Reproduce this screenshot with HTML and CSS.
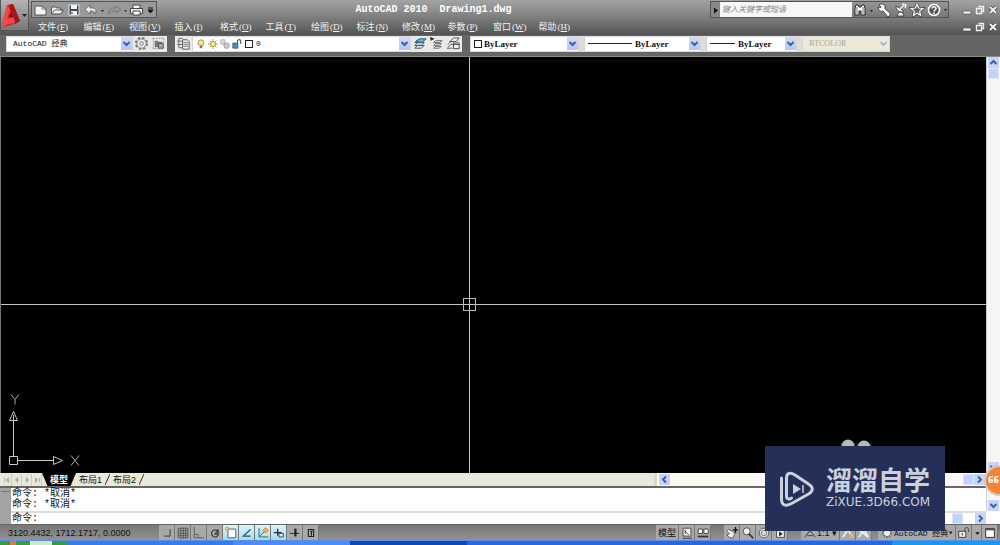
FILE: index.html
```html
<!DOCTYPE html>
<html lang="zh">
<head>
<meta charset="utf-8">
<title>AutoCAD 2010 Drawing1.dwg</title>
<link rel="stylesheet" href="styles.css">
</head>
<body>
<svg class="defs" aria-hidden="true">
  <symbol id="chev" viewBox="0 0 11 11"><path d="M2.500 4l3 3 3-3" fill="none" stroke="#3f5f9f" stroke-width="2"/></symbol>
  <symbol id="square" viewBox="0 0 10 10"><rect x="1.500" y="1.500" width="7" height="7" fill="#fff" stroke="#222"/></symbol>
  <symbol id="min" viewBox="0 0 10 10"><path d="M1 6h8v3H1z" fill="#eee" stroke="#444" stroke-width=".6"/></symbol>
  <symbol id="restore" viewBox="0 0 10 10"><path d="M3.500 1.500h5v5h-2M1.500 3.500h5v5h-5z" fill="none" stroke="#eee" stroke-width="1.400"/></symbol>
  <symbol id="close" viewBox="0 0 10 10"><path d="M2 2l6 6M8 2l-6 6" stroke="#444" stroke-width="3.200"/><path d="M2 2l6 6M8 2l-6 6" stroke="#f2f2f2" stroke-width="2"/></symbol>
  <symbol id="layers" viewBox="0 0 16 16"><path d="M3 13l3-3h7l-3 3zM3 10l3-3h7l-3 3zM3 7l3-3h7l-3 3z" fill="#dde6ee" stroke="#4b5964"/></symbol>
</svg>

<header class="header">
  <button class="app" aria-label="应用程序菜单">
    <svg width="29" height="30" viewBox="0 0 29 30"><path d="M7 5l6-1 7 17-5 3-11 3-2-3z" fill="#d3262b"/><path d="M9 5l4-1 7 17-5 3z" fill="#a7151c"/><path d="M7 5l3 5-3 9 7-1 1 5-7 1-5 3-1-3z" fill="#ef4a4d"/><path d="M9 17l2-5 2 5z" fill="#82090f"/><path d="M22 14h5l-2.500 3z" fill="#222"/></svg>
  </button>
  <div class="bars">
    <div class="titlebar">
      <div class="quick">
        <button aria-label="新建"><svg width="17" height="14" viewBox="0 0 15 14"><path d="M2 3h7l4 3v6H2z" fill="#f5f5f5" stroke="#555"/><path d="M9 3v3h4" fill="none" stroke="#777"/></svg></button>
        <button aria-label="打开"><svg width="16" height="14" viewBox="0 0 15 14"><path d="M2 11V4h4l1 1h4v2h3l-3 4z" fill="#eee" stroke="#555"/><path d="M3 10l2-3h8" fill="none" stroke="#666"/></svg></button>
        <button aria-label="保存"><svg width="17" height="14" viewBox="0 0 17 14"><path d="M4 2h10v10H4z" fill="#3d4852" stroke="#dfe4e8"/><path d="M6 2h6v4H6zM6 8h6v4H6z" fill="#f4f4f4"/><path d="M7 9v2" stroke="#333"/></svg></button>
        <button aria-label="放弃"><svg width="22" height="14" viewBox="0 0 22 14"><path d="M8 2v3h2c4 0 5 3 3 6 0-2-1-3-3-3H8v3L3 6.500z" fill="#eee" stroke="#555" stroke-width=".7"/><path d="M19 7h3l-1.500 2z" fill="#222"/></svg></button>
        <button aria-label="重做"><svg width="24" height="14" viewBox="0 0 24 14"><path d="M12 3v2H9c-4 0-5 3-4 6 1-2 2-3 4-3h3v2l5-3.500z" fill="#999" stroke="#707070" stroke-width=".8"/><path d="M20 7h3l-1.500 2z" fill="#333"/></svg></button>
        <button aria-label="打印"><svg width="17" height="14" viewBox="0 0 15 14"><path d="M4 6V2h7v4" fill="#fff" stroke="#444"/><path d="M1.500 5.500h12v5h-12z" fill="#eee" stroke="#444"/><path d="M4 8h7v4H4z" fill="#fff" stroke="#444"/></svg></button>
        <button aria-label="自定义"><svg width="11" height="14" viewBox="2 0 11 14"><path d="M5 5h5M5 7h5l-2.500 3z" fill="#111" stroke="#111"/></svg></button>
      </div>
      <h1 class="title">AutoCAD 2010&nbsp; Drawing1.dwg</h1>
      <div class="info">
        <button class="expand" aria-label="展开"><svg width="9" height="14" viewBox="0 0 9 14"><path d="M3 4.500l4 3-4 3z" fill="#111"/></svg></button>
        <input class="search" type="text" aria-label="搜索" placeholder="键入关键字或短语">
        <button aria-label="搜索"><svg width="24" height="14" viewBox="0 0 24 14"><path d="M3 5l1-3h2l1 2h2l1-2h2l1 3v7H9V8H7v4H3z" fill="#fff" stroke="#222"/><path d="M5 4v7M11 4v7" stroke="#777"/><path d="M18 7h3l-1.500 2z" fill="#222"/></svg></button>
        <button aria-label="工具"><svg width="16" height="14" viewBox="0 0 16 14"><path d="M3 2c2-2 5-1 6 1v3l5 4v2l-2 2-5-6c-3 1-5-1-5-4l2 1 1-1z" fill="#f6f6f6" stroke="#333" stroke-width=".8"/></svg></button>
        <button aria-label="通讯中心"><svg width="17" height="14" viewBox="0 0 17 14"><path d="M4 3c0 4 3 7 8 6L9 6zM7 9l-2 4h7l-2-4z" fill="#f6f6f6" stroke="#333" stroke-width=".8"/><path d="M8 6l4-4M10 1l4 1-1 3" fill="none" stroke="#eee" stroke-width="1.400"/></svg></button>
        <button aria-label="收藏夹"><svg width="16" height="14" viewBox="0 0 16 14"><path d="M8 1l1.700 4 4.300.4-3.300 3 1 4.100L8 10.300l-3.700 2.200 1-4.100-3.300-3L6.300 5z" fill="#888" stroke="#333" stroke-width="2.600"/><path d="M8 1l1.700 4 4.300.4-3.300 3 1 4.100L8 10.300l-3.700 2.200 1-4.100-3.300-3L6.300 5z" fill="#666" stroke="#fff" stroke-width="1.200"/></svg></button>
        <button class="help" aria-label="帮助"><svg width="16" height="14" viewBox="0 0 16 14"><circle cx="8" cy="7" r="5.500" fill="#555" stroke="#fff" stroke-width="1.500"/><path d="M6 5.500c0-2.500 4-2.500 4 0 0 1.500-2 1.500-2 3M8 9.500V11" fill="none" stroke="#fff" stroke-width="1.500"/></svg></button>
        <svg width="5" height="14" viewBox="0 0 5 14"><path d="M1 6h3L2.500 8z" fill="#222"/></svg>
      </div>
      <div class="wincontrols">
        <button aria-label="最小化"><svg><use href="#min"/></svg></button>
        <button aria-label="还原"><svg><use href="#restore"/></svg></button>
        <button aria-label="关闭"><svg><use href="#close"/></svg></button>
      </div>
    </div>
    <nav class="menubar">
      <div class="menus"><button>文件<i>(<u>F</u>)</i></button><button>编辑<i>(<u>E</u>)</i></button><button>视图<i>(<u>V</u>)</i></button><button>插入<i>(<u>I</u>)</i></button><button>格式<i>(<u>O</u>)</i></button><button>工具<i>(<u>T</u>)</i></button><button>绘图<i>(<u>D</u>)</i></button><button>标注<i>(<u>N</u>)</i></button><button>修改<i>(<u>M</u>)</i></button><button>参数<i>(<u>P</u>)</i></button><button>窗口<i>(<u>W</u>)</i></button><button>帮助<i>(<u>H</u>)</i></button></div>
      <div class="wincontrols">
        <button aria-label="最小化图形"><svg><use href="#min"/></svg></button>
        <button aria-label="还原图形"><svg><use href="#restore"/></svg></button>
        <button aria-label="关闭图形"><svg><use href="#close"/></svg></button>
      </div>
    </nav>
  </div>
</header>

<div class="toolbars">
  <div class="toolbar">
    <label class="combo workspace"><select aria-label="工作空间"><option>AutoCAD 经典</option></select><svg class="drop"><use href="#chev"/></svg></label>
    <button class="tool" aria-label="工作空间设置"><svg viewBox="0 0 16 16"><circle cx="8" cy="8" r="6" fill="#eee" stroke="#777" stroke-width="2" stroke-dasharray="2.700 2"/><circle cx="8" cy="8" r="5" fill="#eee" stroke="#777"/><circle cx="8" cy="8" r="2" fill="none" stroke="#777"/></svg></button>
    <button class="tool" aria-label="我的工作空间"><svg viewBox="0 0 16 16"><path d="M2 2.500h12M2 13.500h12M2.500 2v12M13.500 2v12" stroke="#999" stroke-dasharray="2 1"/><path d="M4 5h3l1 1h4v6H4z" fill="#777"/><path d="M8 8h5v5H8z" fill="#aaa" stroke="#555"/></svg></button>
  </div>
  <div class="toolbar layers">
    <button class="tool" aria-label="图层特性"><svg viewBox="0 0 16 16"><path d="M7 2.500H3v10h4M3 5.500h4M3 9h4M1 5.500h2M1 9h2" fill="none" stroke="#666"/><path d="M7 4h5l2 2v8H7z" fill="#eee" stroke="#555"/><path d="M8 7h5M8 9h5M8 11h5" stroke="#777"/></svg></button>
    <label class="combo layer">
      <svg class="state" viewBox="0 0 12 12"><circle cx="6" cy="4.500" r="3.500" fill="#ffe48b" stroke="#a97f2b"/><path d="M4.500 8h3v3h-3z" fill="#777"/></svg>
      <svg class="state" viewBox="0 0 12 12"><path d="M6 0v12M0 6h12M2 2l8 8M10 2l-8 8" stroke="#b18b3c"/><circle cx="6" cy="6" r="3" fill="#fff09a" stroke="#a77f32"/></svg>
      <svg class="state" viewBox="0 0 12 12"><path d="M1 1h5v5H1zM3 6h3" fill="#ddd" stroke="#aaa"/><circle cx="8" cy="8" r="3.300" fill="#ccc" stroke="#999"/></svg>
      <svg class="state" viewBox="0 0 12 12"><path d="M1 5h6v6H1z" fill="#4c91ba" stroke="#235b80"/><path d="M6.500 5V3c0-3 4-3 4 0v3" fill="none" stroke="#35617e" stroke-width="1.400"/></svg>
      <svg class="swatch"><use href="#square"/></svg>
      <select aria-label="图层"><option>0</option></select><svg class="drop"><use href="#chev"/></svg>
    </label>
    <button class="tool" aria-label="置为当前"><svg viewBox="0 0 16 16"><use href="#layers"/><path d="M4 6l4-3h7l-4 4z" fill="#65aee0" stroke="#28597d"/></svg></button>
    <button class="tool" aria-label="上一个图层"><svg viewBox="0 0 16 16"><path d="M5 13l2-2h6l-2 2zM5 10l2-2h6l-2 2zM5 7l2-2h7l-3 2z" fill="#eee" stroke="#666"/><path d="M1 1l5 2-4 2z" fill="#222"/></svg></button>
    <button class="tool" aria-label="图层状态"><svg viewBox="0 0 16 16"><path d="M2 12l3-3h3M2 9l3-3h4M4 6l4-4h6l-3 4H4M1 13h6" fill="none" stroke="#555"/><path d="M8 7.500h6v6H8zM8 9h6" fill="#eee" stroke="#444"/></svg></button>
  </div>
  <div class="toolbar props">
    <label class="combo color"><svg class="swatch"><use href="#square"/></svg><select aria-label="颜色"><option>ByLayer</option></select><svg class="drop"><use href="#chev"/></svg></label>
    <label class="combo linetype"><span class="line"></span><select aria-label="线型"><option>ByLayer</option></select><svg class="drop"><use href="#chev"/></svg></label>
    <label class="combo weight"><span class="line"></span><select aria-label="线宽"><option>ByLayer</option></select><svg class="drop"><use href="#chev"/></svg></label>
    <label class="combo plot"><select aria-label="打印样式" disabled><option>BTCOLOR</option></select><svg class="drop"><use href="#chev"/></svg></label>
  </div>
</div>

<main class="drawing">
  <div class="canvas">
    <div class="cross-h"></div><div class="cross-v"></div><div class="pick"></div>
    <svg class="ucs" viewBox="0 0 76 76"><g fill="none" stroke="#c8c8c8"><path d="M5.500 60.500h8v8h-8zM9.500 60V19M14 64.500h36M9.500 15.500l-4 9h8zM58.500 64.500l-9-4v8z"/><path d="M7 -1.500l4 5 4-5M11 3.500v5M67 59.500l8 10M75 59.500l-8 10" stroke="#aaa"/></g></svg>
    <svg class="ears" viewBox="0 0 30 10"><circle cx="7" cy="7" r="6.500" fill="#b9b9b5"/><circle cx="23" cy="8" r="6.500" fill="#b9b9b5"/></svg>
  </div>
  <div class="vscroll"><button aria-label="向上"><svg class="up"><use href="#chev"/></svg></button><span class="thumb"></span><span class="space"></span><button aria-label="向下"><svg><use href="#chev"/></svg></button></div>
</main>

<div class="tabs">
  <div class="steps">
    <button aria-label="第一个"><svg viewBox="0 0 10 10"><path d="M2 2v6M7 2L4 5l3 3z" fill="#aaa" stroke="#aaa"/></svg></button>
    <button aria-label="上一个"><svg viewBox="0 0 10 10"><path d="M6 2L3 5l3 3z" fill="#aaa" stroke="#aaa"/></svg></button>
    <button aria-label="下一个"><svg viewBox="0 0 10 10"><path d="M4 2l3 3-3 3z" fill="#aaa" stroke="#aaa"/></svg></button>
    <button aria-label="最后一个"><svg viewBox="0 0 10 10"><path d="M8 2v6M3 2l3 3-3 3z" fill="#aaa" stroke="#aaa"/></svg></button>
  </div>
  <button class="tab active">模型</button><button class="tab">布局1</button><svg class="slash" viewBox="0 0 5 13"><path d="M0 12L5 1" stroke="#333"/></svg><button class="tab">布局2</button><svg class="slash" viewBox="0 0 5 13"><path d="M0 12L5 1" stroke="#333"/></svg>
  <div class="hscroll"><button aria-label="向左"><svg class="left"><use href="#chev"/></svg></button><span class="space"></span><span class="thumb"></span><button aria-label="向右"><svg class="right"><use href="#chev"/></svg></button></div>
</div>

<section class="command">
  <div class="grip"></div>
  <div class="console">
    <div class="history"><p>命令: *取消*</p><p>命令: *取消*</p></div>
    <div class="prompt"><label for="cmd">命令:</label><input id="cmd" type="text"><span class="thumb"></span><button aria-label="命令向右"><svg class="right"><use href="#chev"/></svg></button></div>
  </div>
  <div class="cmdscroll"><span class="space"></span><button aria-label="命令向下"><svg><use href="#chev"/></svg></button></div>
</section>

<footer class="status">
  <output class="coords">3120.4432, 1712.1717, 0.0000</output>
  <div class="cells toggles">
    <button aria-label="捕捉"><svg viewBox="0 0 16 16"><path d="M4 4h8v8H4z" fill="none" stroke="#888" stroke-dasharray="1 1"/><path d="M11.500 4v7.500H5" fill="none" stroke="#333"/></svg></button>
    <button aria-label="栅格"><svg viewBox="0 0 16 16"><path d="M2.500 2.500h11v11h-11zM5.500 2v12M8.500 2v12M11 2v12M2 5.500h12M2 8.500h12M2 11h12" fill="none" stroke="#444" stroke-width=".8"/></svg></button>
    <button aria-label="正交"><svg viewBox="0 0 16 16"><path d="M2.500 1v12.500H14M3 9.500h4v4" fill="none" stroke="#555"/></svg></button>
    <button aria-label="极轴"><svg viewBox="0 0 16 16"><path d="M11.500 6.500A4 4 0 1 0 12 9H8l4-5" fill="none" stroke="#333" stroke-width="1.200"/><path d="M11 3l2 5-3-1z" fill="#333"/></svg></button>
    <button class="on" aria-label="对象捕捉"><svg viewBox="0 0 16 16"><path d="M4.500 3.500h9v10h-9z" fill="#fff" stroke="#456"/><path d="M2 1.500h3v3H2z" fill="#ffda9e" stroke="#d58b3c"/></svg></button>
    <button class="on" aria-label="对象追踪"><svg viewBox="0 0 16 16"><path d="M12 4l-8 7.500h8" fill="none" stroke="#245b69" stroke-width="1.500"/></svg></button>
    <button class="on" aria-label="动态 UCS"><svg viewBox="0 0 16 16"><path d="M3.500 2v10.500H14M3.500 12.500l8-8" fill="none" stroke="#245b69"/><path d="M8 5l3-3 3 3-3 3z" fill="#efb64b" stroke="#b57622"/></svg></button>
    <button class="on" aria-label="动态输入"><svg viewBox="0 0 16 16"><path d="M2 7.500h9M6.500 3v8" stroke="#234" stroke-width="1.500"/><path d="M8 8.500h5v4H8z" fill="#d9ebf0" stroke="#345"/></svg></button>
    <button aria-label="线宽显示"><svg viewBox="0 0 16 16"><path d="M2 8.500h11" stroke="#222"/><path d="M8.500 3v9" stroke="#222" stroke-width="2.500"/></svg></button>
    <button aria-label="快捷特性"><svg viewBox="0 0 16 16"><path d="M5 4h6v8H5zM7 6h3M8.500 6v5" fill="none" stroke="#222" stroke-width="1.300"/></svg></button>
  </div>
  <div class="fill"></div>
  <div class="cells">
    <button class="text">模型</button>
    <button aria-label="布局"><svg viewBox="0 0 16 16"><path d="M3.500 2.500h9v9h-9z" fill="#eee" stroke="#444"/><path d="M5 5l5 5M6 9V5" fill="none" stroke="#444"/><path d="M3 14h11" stroke="#333"/></svg></button>
    <button aria-label="快速查看"><svg viewBox="0 0 16 16"><path d="M2.500 3.500h5v5h-5zM9 3.500h5v5H9z" fill="#fff" stroke="#333"/><path d="M2 12h12" stroke="#333" stroke-width="2"/></svg></button>
  </div>
  <div class="cells">
    <button aria-label="平移"><svg viewBox="0 0 16 16"><path d="M2 6l2-2 5 2 2 3-2 5-4-1-3-3 3-1z" fill="#eee" stroke="#555"/><path d="M12 1v7M9 4.500h6" stroke="#111" stroke-width="1.500"/></svg></button>
    <button aria-label="缩放"><svg viewBox="0 0 16 16"><circle cx="6.500" cy="6" r="4" fill="#eee" stroke="#444"/><path d="M9 9l5 5" stroke="#333" stroke-width="2"/></svg></button>
    <button aria-label="导航"><svg viewBox="0 0 16 16"><circle cx="8" cy="8" r="5.500" fill="#ddd" stroke="#555"/><circle cx="8" cy="8" r="3" fill="none" stroke="#777"/></svg></button>
    <button aria-label="运动"><svg viewBox="0 0 16 16"><path d="M4 4h9v9H4z" fill="#eee" stroke="#444"/><path d="M7 6l4 3-4 3z" fill="#223"/></svg></button>
  </div>
  <div class="cells scaling">
    <button class="text scale"><svg viewBox="0 0 16 16"><path d="M8 5l-6 8M8 5l6 8M8 1v6M5 11h6" fill="none" stroke="#333"/></svg>1:1 ▾</button>
    <button aria-label="注释可见性"><svg viewBox="0 0 16 16"><path d="M2 13l6-9 5 9" fill="none" stroke="#eee" stroke-width="2"/><path d="M10 8l4 4-3 2z" fill="#eeb83e"/></svg></button>
    <button aria-label="自动注释"><svg viewBox="0 0 16 16"><path d="M2 13l6-9 5 9M3 5l9 7" fill="none" stroke="#eee" stroke-width="2"/></svg></button>
  </div>
  <div class="cells last">
    <button class="text ws"><svg viewBox="0 0 16 16"><circle cx="8" cy="8" r="4.500" fill="#eee" stroke="#555" stroke-width="2" stroke-dasharray="2 1"/></svg>AutoCAD 经典<span>▾</span></button>
    <button aria-label="锁定"><svg viewBox="0 0 16 16"><path d="M2 6h8v7H2z" fill="#eee" stroke="#333"/><path d="M9 6V4c0-3 4-3 4 0v3" fill="none" stroke="#333"/><path d="M6 8v3" stroke="#222"/></svg></button>
    <button class="narrow" aria-label="状态栏菜单"><svg viewBox="0 0 8 16"><path d="M2 7h5L4.500 10z" fill="#111"/></svg></button>
    <button aria-label="全屏显示"><svg viewBox="0 0 16 16"><path d="M3 3h10v10H3z" fill="#fff" stroke="#222"/><path d="M3 4h10" stroke="#555" stroke-width="2"/></svg></button>
  </div>
</footer>

<div class="taskbar"><span class="start"></span><span class="task"></span><span class="task light"></span><span class="task dark"></span><span class="rest"></span><span class="tray"></span></div>

<aside class="brand">
  <svg viewBox="0 0 36 38"><g fill="none" stroke="#cbd0df" stroke-width="3" stroke-linecap="round"><path d="M2.500 8v21c0 8 6 7 11 4l16-9c5-3 5-7 0-10L16 5C11 2 7.500 3 7.500 8v18c0 3 3 4 5 2"/></g><path d="M14 14l8 5-8 5z" fill="#cbd0df"/><path d="M24 15v8" stroke="#cbd0df" stroke-width="1.500"/></svg>
  <div class="words"><strong>溜溜自学</strong><span>ZiXUE.3D66.COM</span></div>
</aside>
<div class="badge">66</div>
</body>
</html>
```

FILE: styles.css
```css
* { box-sizing: border-box; }
body {
  margin: 0;
  height: 100vh;
  display: flex;
  flex-direction: column;
  overflow: hidden;
  background: #656565;
  font: 9px "Liberation Sans", "Noto Sans CJK SC", sans-serif;
  color: #111;
}
button, input, select { font: inherit; color: inherit; margin: 0; padding: 0; border: 0; background: none; border-radius: 0; }
button { display: flex; align-items: center; justify-content: center; }
svg { display: block; flex: none; }
.defs { position: absolute; width: 0; height: 0; }

.header { display: flex; background: linear-gradient(#a3a3a3, #8b8b8b 35%, #555); height: 34px; }
.app { width: 29px; height: 31px; background: linear-gradient(#b5b5b5, #777); border: 1px solid #555; border-top: 0; }
.bars { flex: 1; min-width: 0; display: flex; flex-direction: column; }
.titlebar { display: flex; align-items: center; height: 19px; padding-right: 2px; }
.quick { display: flex; align-items: center; height: 17px; margin-left: 2px; border: 1px solid #555; background: #999; }
.title { flex: 1; margin: 0; text-align: center; font: bold 10px "Liberation Mono", monospace; color: #fff; white-space: nowrap; }
.info { display: flex; align-items: center; height: 17px; border: 1px solid #555; background: linear-gradient(#969696, #777); }
.expand { height: 15px; background: #888; }
.search { width: 132px; height: 15px; padding-left: 2px; background: #f7f7f7; font-size: 8px; font-style: italic; }
.search::placeholder { color: #888; opacity: 1; }
.help { width: 18px; }
.wincontrols { display: flex; align-items: center; gap: 3px; margin-left: 13px; }
.wincontrols svg { width: 10px; height: 10px; }
.menubar { display: flex; align-items: center; height: 15px; padding: 0 2px 0 9px; color: #f3f3f3; }
.menus { display: flex; width: 546px; }
.menus button { flex: 1; justify-content: flex-start; white-space: nowrap; }
.menubar i { font: 9px "Liberation Serif", serif; margin-left: 1px; }
.menubar .wincontrols { margin-left: auto; }

.toolbars { display: flex; align-items: center; gap: 8px; height: 23px; padding: 0 0 4px 6px; background: #656565; border-top: 1px solid #555; border-bottom: 1px solid #8a8a84; }
.toolbar { display: flex; height: 16px; background: #e9e9e7; font: 8px "Liberation Mono", "Noto Sans CJK SC", monospace; }
.tool { width: 17px; height: 16px; }
.tool svg { width: 15px; height: 15px; }
.combo { display: flex; align-items: center; background: #fff; border: 1px solid #d8d8d8; }
.combo select { flex: 1; min-width: 0; height: 14px; appearance: none; outline: 0; }
.drop { width: 11px; height: 13px; background: linear-gradient(#cfdcfb, #b4c7f2); }
.swatch { width: 10px; height: 10px; }
.state { width: 10px; height: 10px; margin-right: 2px; }
.workspace { width: 127px; padding-left: 6px; }
.layer { width: 219px; padding-left: 3px; }
.layer select { padding-left: 2px; }
.props { gap: 5px; background: #dddcd6; font: bold 9px "Liberation Serif", serif; }
.color { width: 109px; padding-left: 2px; }
.color select { padding-left: 1px; }
.line { height: 1px; background: #222; }
.linetype { width: 117px; padding-left: 3px; }
.linetype .line { width: 44px; margin-right: 3px; }
.weight { width: 91px; padding-left: 3px; }
.weight .line { width: 25px; margin-right: 3px; }
.plot { width: 88px; padding-left: 6px; background: #ece9d8; font: 8px "Liberation Serif", serif; }
.plot select { color: #aaa798; opacity: 1; }
.plot .drop { opacity: .35; background: #eee; }

.drawing { flex: 1; min-height: 0; display: flex; background: #000; }
.canvas { flex: 1; position: relative; border-left: 1px solid #777; overflow: hidden; }
.cross-h { position: absolute; left: 0; right: 0; top: 247px; height: 1px; background: #c4c4c4; }
.cross-v { position: absolute; top: 0; bottom: 0; left: 468px; width: 1px; background: #c4c4c4; }
.pick { position: absolute; left: 462px; top: 241px; width: 13px; height: 13px; border: 1px solid #bbb; }
.ucs { position: absolute; left: 3px; bottom: 1px; width: 76px; height: 76px; overflow: visible; }
.ears { position: absolute; right: 115px; bottom: 24px; width: 30px; height: 10px; }
.vscroll, .cmdscroll { width: 14px; display: flex; flex-direction: column; align-items: center; background: #f5f6f4; border-left: 1px solid #ccc; }
.vscroll button, .cmdscroll button, .hscroll button, .prompt button { width: 11px; height: 11px; background: #c5d5fa; }
.vscroll svg, .cmdscroll svg, .hscroll svg, .prompt svg { width: 11px; height: 11px; }
.up { transform: rotate(180deg); }
.left { transform: rotate(90deg); }
.right { transform: rotate(-90deg); }
.thumb { width: 11px; height: 11px; background: #c1d2fb; border: 1px solid #dce6fd; }
.space { flex: 1; }

.tabs { display: flex; align-items: center; height: 13px; background: #eae8d8; }
.steps { display: flex; margin-left: 2px; }
.steps button { width: 10px; height: 12px; border-right: 1px solid #ccc9ba; }
.steps svg { width: 8px; height: 8px; }
.tab { height: 13px; padding: 0 3px; line-height: 12px; }
.tab.active { width: 34px; background: #000; color: #fff; font-weight: bold; clip-path: polygon(0 0, 100% 0, 84% 100%, 16% 100%); }
.slash { width: 5px; height: 13px; }
.hscroll { display: flex; align-items: center; width: 332px; height: 13px; margin-left: auto; margin-right: 14px; background: #faf9f4; border-left: 3px solid #dcd9ca; padding: 0 1px 0 2px; }

.command { display: flex; height: 38px; border-top: 2px solid #666; background: #fff; font: 10px "Liberation Mono", "Noto Sans CJK SC", monospace; }
.grip { width: 11px; background: linear-gradient(#777, #777) 1px 3px / 9px 1px no-repeat, #a3a3a3; }
.console { flex: 1; display: flex; flex-direction: column; }
.history { height: 23px; }
.history p { margin: 0; height: 11px; line-height: 11px; padding-left: 1px; }
.prompt { display: flex; align-items: center; height: 13px; padding-left: 1px; border-top: 2px solid #ddd; }
.prompt label { line-height: 11px; }
.prompt input { flex: 1; min-width: 0; height: 11px; outline: 0; }
.prompt .thumb { margin-right: 12px; }
.cmdscroll { height: 23px; }

.status { display: flex; align-items: center; height: 16px; padding-left: 8px; background: linear-gradient(#777, #929292); border-top: 1px solid #666; }
.coords { width: 151px; white-space: nowrap; }
.cells { display: flex; height: 15px; margin-right: 13px; background: #a9a9a9; }
.cells button { width: 16px; height: 15px; border-right: 1px solid #777; }
.cells svg { width: 14px; height: 14px; }
.cells .on { background: linear-gradient(#d8f4fb, #a8dcea); }
.cells .text { width: auto; padding: 0 2px; white-space: nowrap; }
.cells .scale { width: 39px; }
.cells .ws { width: 78px; font: 8px "Liberation Mono", "Noto Sans CJK SC", monospace; }
.cells .narrow { width: 10px; }
.cells.scaling { margin-right: 6px; }
.cells.last { margin-right: 2px; }
.fill { flex: 1; }

.taskbar { display: flex; height: 5px; background: #1b5cd6; border-top: 1px solid #5790ee; }
.start { width: 68px; background: linear-gradient(90deg, #3c9a3c 10px, #e8743a 10px 16px, #3c9a3c 16px 30px, #cfe8cf 30px 52px, #3c9a3c 52px); }
.task { width: 165px; background: #3a7bea; }
.light { width: 117px; background: #4c8cf5; }
.dark { background: #1646b0; width: 117px; }
.rest { flex: 1; background: #2a66dc; }
.tray { width: 108px; background: #169bec; }

.brand { position: absolute; right: 55px; bottom: 14px; width: 180px; height: 85px; padding-left: 14px; display: flex; align-items: center; gap: 11px; background: #243058; color: #cbd0df; }
.brand svg { width: 36px; height: 38px; }
.words { display: flex; flex-direction: column; gap: 4px; padding-bottom: 4px; }
.brand strong, .brand span { display: block; white-space: nowrap; }
.brand strong { font: bold 26px/26px "Noto Sans CJK SC", sans-serif; }
.brand span { font: 12px/12px "DejaVu Sans", sans-serif; }
.badge { position: absolute; right: -15px; bottom: 49px; width: 31px; height: 31px; padding-left: 2px; border: 2px solid #d9c9b8; border-radius: 50%; background: #f2843a; color: #fff; font: bold 8px/27px "DejaVu Sans", sans-serif; }
```
